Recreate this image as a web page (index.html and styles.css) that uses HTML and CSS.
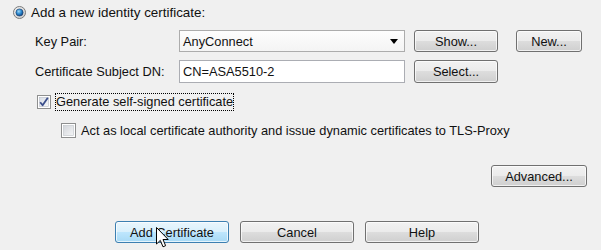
FILE: index.html
```html
<!DOCTYPE html>
<html>
<head>
<meta charset="utf-8">
<link rel="stylesheet" href="styles.css">
</head>
<body>
<div class="dialog">
  <div class="radio-row">
    <svg class="radio" width="13" height="13" viewBox="0 0 13 13">
      <defs>
        <radialGradient id="rg" cx="0.4" cy="0.35" r="0.7">
          <stop offset="0" stop-color="#9fd6f5"/>
          <stop offset="0.5" stop-color="#2b8ad1"/>
          <stop offset="1" stop-color="#0d3c77"/>
        </radialGradient>
        <linearGradient id="rb" x1="0" y1="0" x2="1" y2="1">
          <stop offset="0" stop-color="#f4f4f4"/>
          <stop offset="1" stop-color="#c9c9c9"/>
        </linearGradient>
      </defs>
      <circle cx="6.5" cy="6.5" r="6" fill="url(#rb)" stroke="#7b7b7b" stroke-width="1"/>
      <circle cx="6.5" cy="6.5" r="3.6" fill="url(#rg)" stroke="#1a3d6b" stroke-width="0.6"/>
    </svg>
    <span>Add a new identity certificate:</span>
  </div>

  <div class="form-row first">
    <span class="label">Key Pair:</span>
    <div class="combo">
      <span>AnyConnect</span>
      <span class="arrow"></span>
    </div>
    <button class="btn mid">Show...</button>
    <button class="btn small">New...</button>
  </div>

  <div class="form-row second">
    <span class="label">Certificate Subject DN:</span>
    <div class="field">CN=ASA5510-2</div>
    <button class="btn mid">Select...</button>
  </div>

  <div class="check-row gen">
    <svg class="check" width="14" height="14" viewBox="0 0 14 14">
      <defs>
        <linearGradient id="cb" x1="0" y1="0" x2="1" y2="1">
          <stop offset="0" stop-color="#d8dde6"/>
          <stop offset="1" stop-color="#f7f8fa"/>
        </linearGradient>
      </defs>
      <rect x="0.5" y="0.5" width="13" height="13" fill="#fff" stroke="#8e8f8f"/>
      <rect x="2.5" y="2.5" width="9" height="9" fill="url(#cb)" stroke="#b7bcc6" stroke-width="0.6"/>
      <path d="M3.2 7.2 L5.6 10.2 L10.8 2.8" fill="none" stroke="#3b4f8c" stroke-width="1.8" stroke-linejoin="round"/>
    </svg>
    <span class="focus">Generate self-signed certificate</span>
  </div>

  <div class="check-row act">
    <svg class="check" width="15" height="15" viewBox="0 0 15 15">
      <defs>
        <linearGradient id="cb2" x1="0" y1="0" x2="1" y2="1">
          <stop offset="0" stop-color="#d3d6db"/>
          <stop offset="1" stop-color="#f4f5f6"/>
        </linearGradient>
      </defs>
      <rect x="0.5" y="0.5" width="14" height="14" fill="#fff" stroke="#8e8f8f"/>
      <rect x="2.5" y="2.5" width="10" height="10" fill="url(#cb2)" stroke="#bfc3c8" stroke-width="0.6"/>
    </svg>
    <span>Act as local certificate authority and issue dynamic certificates to TLS-Proxy</span>
  </div>

  <div class="adv-row">
    <button class="btn adv">Advanced...</button>
  </div>

  <div class="bottom-row">
    <button class="btn wide hot">Add Certificate</button>
    <button class="btn wide">Cancel</button>
    <button class="btn wide">Help</button>
  </div>
</div>

<svg class="cursor" width="14" height="24" viewBox="0 0 14 24">
  <path d="M0.5 0.5 L0.5 17 L4.3 13.4 L7 19.8 L9.6 18.7 L7 12.5 L12.2 12.5 Z" fill="#fff" stroke="#000" stroke-width="1" stroke-linejoin="round"/>
</svg>
</body>
</html>
```

FILE: styles.css
```css
html, body {
  margin: 0;
  padding: 0;
}

body {
  width: 601px;
  height: 250px;
  overflow: hidden;
  background: #f0f0f0;
  font-family: "Liberation Sans", Arial, sans-serif;
  font-size: 12.8px;
  color: #111;
  position: relative;
}

.dialog {
  display: flex;
  flex-direction: column;
}

.radio-row {
  display: flex;
  align-items: center;
  height: 24px;
  padding-left: 13px;
  gap: 5px;
  font-size: 13.4px;
}

.radio {
  flex: none;
}

.form-row {
  display: flex;
  align-items: center;
  height: 22px;
  padding-left: 35px;
}

.form-row.first {
  margin-top: 6px;
}

.form-row.second {
  margin-top: 8px;
  height: 23px;
}

.label {
  width: 144px;
  flex: none;
}

.combo,
.field {
  box-sizing: border-box;
  width: 226px;
  height: 100%;
  border: 1px solid #a9a9a9;
  background: #fff;
  display: flex;
  align-items: center;
  padding-left: 3px;
  flex: none;
}

.combo {
  justify-content: space-between;
  padding-right: 6px;
  background: linear-gradient(#fdfdfd, #f4f4f4);
  border-color: #acacac;
}

.field {
  border-color: #abadb3;
}

.arrow {
  width: 0;
  height: 0;
  border-left: 4px solid transparent;
  border-right: 4px solid transparent;
  border-top: 5px solid #000;
}

.btn {
  box-sizing: border-box;
  height: 22px;
  border: 1px solid #707070;
  border-radius: 3px;
  background: linear-gradient(#f2f2f2 0%, #ebebeb 49%, #dddddd 50%, #cfcfcf 100%);
  box-shadow: inset 0 0 0 1px rgba(255, 255, 255, 0.7);
  font-family: "Liberation Sans", Arial, sans-serif;
  font-size: 12.8px;
  color: #111;
  padding: 0;
  flex: none;
}

.btn.mid {
  width: 84px;
  margin-left: 9px;
}

.form-row.second .btn.mid {
  height: 23px;
}

.btn.small {
  width: 66px;
  margin-left: 18px;
}

.check-row {
  display: flex;
  align-items: center;
  gap: 5px;
}

.check {
  flex: none;
}

.check-row.gen {
  margin-top: 10px;
  height: 17px;
  padding-left: 37px;
}

.check-row.act {
  margin-top: 12px;
  height: 17px;
  padding-left: 61px;
}

.focus {
  outline: 1px dotted #000;
  outline-offset: 0;
  padding: 1px 0 1px 0;
  line-height: 14px;
}

.adv-row {
  display: flex;
  justify-content: flex-end;
  padding-right: 14px;
  margin-top: 26px;
}

.btn.adv {
  width: 96px;
}

.bottom-row {
  display: flex;
  gap: 11px;
  padding-left: 115px;
  margin-top: 34px;
}

.btn.wide {
  width: 114px;
}

.btn.hot {
  border-color: #3c7fb1;
  background: linear-gradient(#eaf6fd 0%, #d9f0fc 49%, #bee6fd 50%, #a7d9f5 100%);
}

.cursor {
  position: absolute;
  left: 156px;
  top: 227px;
}
```
